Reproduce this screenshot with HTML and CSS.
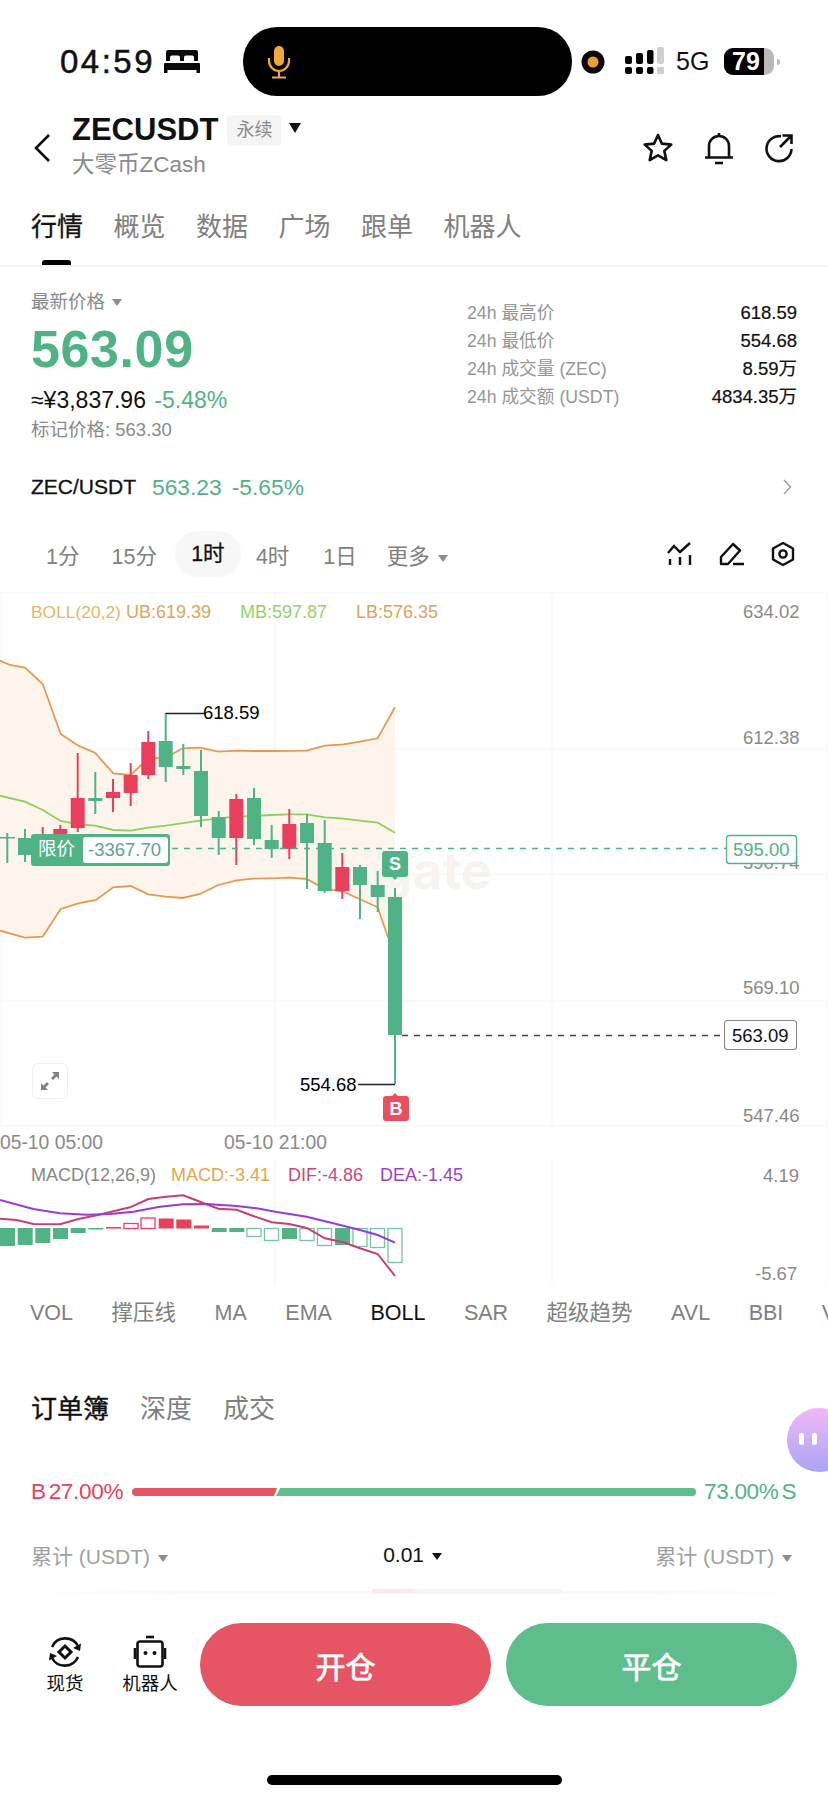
FILE: index.html
```html
<!DOCTYPE html>
<html lang="zh">
<head>
<meta charset="utf-8">
<title>ZECUSDT</title>
<link rel="stylesheet" href="styles.css">
</head>
<body>
<div class="page">

<!-- status bar -->
<div class="status">
  <span class="time">04:59</span>
  <svg class="bed" width="36" height="25" viewBox="0 0 36 25"><path d="M4 1h28a2 2 0 0 1 2 2v9h-4V8.500a2 2 0 0 0-2-2h-6a2 2 0 0 0-2 2V12h-4V8.500a2 2 0 0 0-2-2H8a2 2 0 0 0-2 2V12H2V3a2 2 0 0 1 2-2zM1 14h34a1 1 0 0 1 1 1v9h-3.500v-3h-29v3H0v-9a1 1 0 0 1 1-1z" fill="#0a0a0a"/></svg>
  <div class="island">
    <svg width="24" height="34" viewBox="0 0 24 34"><rect x="7" y="1" width="10" height="20" rx="5" fill="#eea73c"/><path d="M2 13v3a10 10 0 0 0 20 0v-3M12 26v6M5 32.500h14" fill="none" stroke="#eea73c" stroke-width="2.200"/></svg>
  </div>
  <svg class="rec" width="24" height="24" viewBox="0 0 24 24"><circle cx="12" cy="12" r="11.500" fill="#0a0a0a"/><circle cx="12" cy="12" r="5.500" fill="#ee9c38"/></svg>
  <svg class="signal" width="40" height="28" viewBox="0 0 40 28">
    <rect x="0" y="9" width="7" height="8" rx="2"/><rect x="0" y="20" width="7" height="7" rx="2"/>
    <rect x="11" y="6" width="7" height="11" rx="2"/><rect x="11" y="20" width="7" height="7" rx="2"/>
    <rect x="22" y="3" width="6.500" height="14" rx="2"/><rect x="22" y="20" width="6.500" height="7" rx="2"/>
    <rect x="32" y="0" width="7" height="17" rx="2" fill="#cfcfcf"/><rect x="32" y="20" width="7" height="7" rx="1" fill="#cfcfcf"/>
  </svg>
  <span class="net">5G</span>
  <div class="battery"><span class="battery-fill">79</span></div>
  <span class="battery-nub"></span>
</div>

<!-- title -->
<div class="head">
  <svg class="back" width="18" height="30" viewBox="0 0 18 30"><path d="M16 2 3 15l13 13" fill="none" stroke="#111" stroke-width="2.600"/></svg>
  <div class="title-col">
    <div class="title-row">
      <span class="symbol">ZECUSDT</span>
      <span class="badge">永续</span>
      <span class="title-caret"></span>
    </div>
    <div class="subtitle">大零币ZCash</div>
  </div>
  <div class="head-icons">
    <svg width="32" height="32" viewBox="0 0 32 32"><path d="m16 3 3.900 8.600 9.400 1-7 6.300 2 9.200L16 23.400l-8.300 4.700 2-9.200-7-6.300 9.400-1z" fill="none" stroke="#111" stroke-width="2.600" stroke-linejoin="round"/></svg>
    <svg width="30" height="34" viewBox="0 0 30 34"><path d="M1 26.500h28M5 26.500V15a10 10 0 0 1 20 0v11.500M15 2v3M11 32h8" fill="none" stroke="#111" stroke-width="2.600"/></svg>
    <svg width="30" height="30" viewBox="0 0 30 30"><path d="M17 3.300A12.500 12.500 0 1 0 27.500 16M16 14 27 3M18.500 2.500H27.500V11" fill="none" stroke="#111" stroke-width="2.600"/></svg>
  </div>
</div>

<div class="tabs">
  <span class="tab tab-on">行情</span>
  <span class="tab">概览</span>
  <span class="tab">数据</span>
  <span class="tab">广场</span>
  <span class="tab">跟单</span>
  <span class="tab">机器人</span>
</div>

<!-- price block -->
<div class="market">
  <div class="market-left">
    <div class="last-label">最新价格 <i class="caret"></i></div>
    <div class="price">563.09</div>
    <div class="sub-price">≈¥3,837.96 <span class="green">-5.48%</span></div>
    <div class="mark">标记价格: 563.30</div>
  </div>
  <div class="market-right">
    <div class="stat"><span>24h 最高价</span><b>618.59</b></div>
    <div class="stat"><span>24h 最低价</span><b>554.68</b></div>
    <div class="stat"><span>24h 成交量 (ZEC)</span><b>8.59万</b></div>
    <div class="stat"><span>24h 成交额 (USDT)</span><b>4834.35万</b></div>
  </div>
</div>

<div class="spot-row">
  <span class="spot-name">ZEC/USDT</span>
  <span class="green spot-price">563.23</span>
  <span class="green spot-price">-5.65%</span>
  <svg class="spot-arrow" width="9" height="16" viewBox="0 0 9 16"><path d="m1 1 6.500 7L1 15" fill="none" stroke="#999" stroke-width="1.400"/></svg>
</div>

<div class="periods">
  <span class="period p1">1分</span>
  <span class="period p2">15分</span>
  <span class="period period-on">1时</span>
  <span class="period p4">4时</span>
  <span class="period p5">1日</span>
  <span class="period p6">更多 <i class="caret"></i></span>
  <div class="period-icons">
    <svg width="26" height="24" viewBox="0 0 26 24"><path d="M1 11 7 4l6 6 10-9M3 17v6M13 15v8M23 13v10" fill="none" stroke="#111" stroke-width="2.400"/></svg>
    <svg width="26" height="24" viewBox="0 0 26 24"><path d="M2 22v-7L14 2l7 6.500L9 22zM14 22h11" fill="none" stroke="#111" stroke-width="2.400" stroke-linejoin="round"/></svg>
    <svg width="24" height="26" viewBox="0 0 24 26"><path d="m12 2 10 5.500v11L12 24 2 18.500v-11z" fill="none" stroke="#111" stroke-width="2.400" stroke-linejoin="round"/><circle cx="12" cy="13" r="3.600" fill="none" stroke="#111" stroke-width="2.400"/></svg>
  </div>
</div>

<!-- chart, coordinates are page coordinates -->
<div class="chart">
<svg class="chart-svg" width="828" height="693" viewBox="0 592 828 693">
  <g class="grid">
    <path d="M0 592.500H828M0 749H828M0 874H828M0 1001H828M0 1126H828M275 592V1126M552 592V1126M275 1160V1285M552 1160V1285M1 592V1126M827 592V1285"/>
  </g>
  <polygon class="band" points="0,660.700 10,665 25,667.700 42.700,684 60.700,734 78.300,745.700 95,752.700 113.300,773.300 130.700,775 148.300,758.300 165.700,757.700 182.700,748.300 200,747.700 218.300,751.700 236.700,750.700 253.300,751 271.700,751 306.700,750.700 325,745.700 343.300,744.300 360,741.700 377.700,738.300 395,707.300 395,960 388.300,938.300 377.700,907.300 360,899.300 343.300,891.700 325,889 306.700,879 289.300,877.700 271.700,878.300 253.300,878.700 236.700,880.300 218.300,885 200,894 182.700,898 165.700,896.700 148.300,894.300 130.700,886 113.300,887.300 96,900 78.300,903.300 60.700,909 42.700,936.700 25,937.700 0,930.700"/>
  <text class="watermark" x="492" y="889">gate</text>
  <polyline class="line boll-edge" points="0,660.700 10,665 25,667.700 42.700,684 60.700,734 78.300,745.700 95,752.700 113.300,773.300 130.700,775 148.300,758.300 165.700,757.700 182.700,748.300 200,747.700 218.300,751.700 236.700,750.700 253.300,751 271.700,751 306.700,750.700 325,745.700 343.300,744.300 360,741.700 377.700,738.300 395,707.300"/>
  <polyline class="line boll-edge" points="0,930.700 25,937.700 42.700,936.700 60.700,909 78.300,903.300 96,900 113.300,887.300 130.700,886 148.300,894.300 165.700,896.700 182.700,898 200,894 218.300,885 236.700,880.300 253.300,878.700 271.700,878.300 289.300,877.700 306.700,879 325,889 343.300,891.700 360,899.300 377.700,907.300 388.300,938.300"/>
  <polyline class="line boll-mid" points="0,795.700 25,801.700 42.700,810 60.700,821 78.300,824.300 95,825.700 113.300,830 130.700,830.700 148.300,827.700 165.700,825.700 200,820.700 218.300,818.300 236.300,816.700 271.700,815 289.300,814.300 306.700,814.300 325,817.300 343.300,818.700 360,820.700 377.700,822.700 395,832.700"/>

  <!-- candles: wicks -->
  <path class="wick up" d="M7.300 833V863M25 829V862M95.300 772V814M165.700 713V782M183.300 744V775M201 750V827M218.700 811V855M254 788V845M271.700 825V858M307 814V889M324.700 820V893M360 865V919M377.700 871V912M395 888V1084"/>
  <path class="wick down" d="M42.700 827V840M60.300 825V840M77.700 753V832M113 779V812M130.700 763V806M148.300 731V779M236.300 794V865M289.300 809V859M342.300 853V899"/>
  <!-- candles: bodies -->
  <g class="up-fill">
    <rect x="0" y="837" width="15" height="1.500"/>
    <rect x="18" y="838" width="14" height="17"/>
    <rect x="88.300" y="798" width="14" height="3"/>
    <rect x="158.700" y="741" width="14" height="26"/>
    <rect x="176.300" y="766" width="14" height="3"/>
    <rect x="194" y="771" width="14" height="45"/>
    <rect x="211.700" y="817" width="14" height="21"/>
    <rect x="247" y="798" width="14" height="41"/>
    <rect x="264.700" y="840" width="14" height="9"/>
    <rect x="300" y="823" width="14" height="20"/>
    <rect x="317.700" y="843" width="14" height="48"/>
    <rect x="353" y="867" width="14" height="18"/>
    <rect x="370.700" y="885" width="14" height="12"/>
    <rect x="388" y="897" width="14" height="138"/>
  </g>
  <g class="down-fill">
    <rect x="53.300" y="829" width="14" height="10"/>
    <rect x="70.700" y="798" width="14" height="30"/>
    <rect x="106" y="792" width="14" height="6"/>
    <rect x="123.700" y="775" width="14" height="18"/>
    <rect x="141.300" y="742" width="14" height="33"/>
    <rect x="229.300" y="799" width="14" height="39"/>
    <rect x="282.300" y="824" width="14" height="25"/>
    <rect x="335.300" y="867" width="14" height="24"/>
  </g>

  <!-- high and low marks -->
  <path class="mark-line" d="M165.700 713.500H204M358 1084.500H395"/>
  <text class="mark-text" x="203" y="719">618.59</text>
  <text class="mark-text" x="300" y="1091">554.68</text>

  <!-- axis labels -->
  <text class="axis" x="743" y="617.500">634.02</text>
  <text class="axis" x="743" y="743.500">612.38</text>
  <text class="axis" x="743" y="869">590.74</text>
  <text class="axis" x="743" y="994">569.10</text>
  <text class="axis" x="743" y="1121.500">547.46</text>
  <text class="axis axis-time" x="0" y="1148.500">05-10 05:00</text>
  <text class="axis axis-time" x="224" y="1148.500">05-10 21:00</text>
  <text class="axis" x="763" y="1182">4.19</text>
  <text class="axis" x="755" y="1280">-5.67</text>

  <!-- limit order line -->
  <path class="limit-line" d="M172 848.500H726"/>
  <rect class="limit-tag" x="31" y="834" width="139" height="32" rx="3"/>
  <rect class="limit-box" x="83" y="837" width="85" height="26" rx="3"/>
  <text class="limit-name" x="38" y="855">限价</text>
  <text class="limit-val" x="88" y="856">-3367.70</text>
  <rect class="limit-axis" x="726.500" y="835.500" width="70" height="28" rx="3"/>
  <text class="limit-axis-val" x="733" y="855.500">595.00</text>

  <!-- last price line -->
  <path class="last-line" d="M402 1035.500H724"/>
  <rect class="last-axis" x="724.500" y="1020.500" width="72" height="29" rx="3"/>
  <text class="last-axis-val" x="732" y="1041.500">563.09</text>

  <!-- buy and sell marks -->
  <path class="up-fill" d="M385 851h20a3 3 0 0 1 3 3v20a3 3 0 0 1-3 3h-7l-3 3-3-3h-7a3 3 0 0 1-3-3v-20a3 3 0 0 1 3-3z"/>
  <text class="trade-mark" x="395" y="870">S</text>
  <path class="buy-fill" d="M386 1096h6l3-3 3 3h8a3 3 0 0 1 3 3v19a3 3 0 0 1-3 3h-20a3 3 0 0 1-3-3v-19a3 3 0 0 1 3-3z"/>
  <text class="trade-mark" x="396" y="1115">B</text>

  <!-- legends -->
  <text class="legend legend-boll" x="31" y="617.500" fill="#e3b668">BOLL(20,2)</text>
  <text class="legend" x="126" y="617.500" fill="#dba660">UB:619.39</text>
  <text class="legend" x="240" y="617.500" fill="#92d46c">MB:597.87</text>
  <text class="legend" x="356" y="617.500" fill="#dfa25a">LB:576.35</text>
  <text class="legend" x="31" y="1181" fill="#888">MACD(12,26,9)</text>
  <text class="legend" x="171" y="1181" fill="#e5a650">MACD:-3.41</text>
  <text class="legend" x="288" y="1181" fill="#c9497a">DIF:-4.86</text>
  <text class="legend" x="380" y="1181" fill="#9a3fd2">DEA:-1.45</text>

  <!-- macd bars -->
  <g class="up-fill">
    <rect x="0" y="1228" width="15" height="18"/>
    <rect x="17.700" y="1228" width="15" height="17"/>
    <rect x="35.300" y="1228" width="15" height="15"/>
    <rect x="53" y="1228" width="15" height="11"/>
    <rect x="70.700" y="1228" width="15" height="5"/>
    <rect x="88.300" y="1228" width="15" height="1.500"/>
    <rect x="211.700" y="1228" width="15" height="4"/>
    <rect x="229.300" y="1228" width="15" height="4"/>
    <rect x="282" y="1228" width="15" height="11"/>
    <rect x="335" y="1228" width="15" height="17"/>
  </g>
  <g class="down-fill">
    <rect x="106" y="1227" width="15" height="1.500"/>
    <rect x="158.700" y="1218.500" width="15" height="10"/>
    <rect x="176.300" y="1219.500" width="15" height="9"/>
    <rect x="194" y="1225.500" width="15" height="3"/>
  </g>
  <g class="hollow-down">
    <rect x="124" y="1223.500" width="14" height="5"/>
    <rect x="141" y="1218" width="14" height="10.500"/>
  </g>
  <g class="hollow-up">
    <rect x="247" y="1228.500" width="14" height="8"/>
    <rect x="264.500" y="1228.500" width="14" height="12"/>
    <rect x="300" y="1228.500" width="14" height="12"/>
    <rect x="317.500" y="1228.500" width="14" height="17"/>
    <rect x="353" y="1228.500" width="14" height="18"/>
    <rect x="370.500" y="1228.500" width="14" height="19"/>
    <rect x="388" y="1228.500" width="14" height="34"/>
  </g>
  <polyline class="line dif" points="0,1218.700 16.700,1220 33.300,1224 60,1224.300 78.300,1219 96.700,1215.300 130,1207.300 148.300,1199 165.700,1196.700 183.300,1195.300 200,1201.700 218.300,1208.700 236.700,1209.700 253.300,1216 271.700,1222.300 289.300,1224 306.700,1228 325,1238.300 343.300,1242.300 360,1248.300 377.700,1254 395,1276"/>
  <polyline class="line dea" points="0,1200 33.300,1209 60,1213.300 86.700,1214.700 110,1214 133.300,1211.700 160,1206.700 183.300,1204.300 206.700,1204 236.700,1206 256.700,1208.300 276.700,1212 306.700,1216.700 333.300,1223.300 360,1230 377.700,1235 395,1242.700"/>
</svg>
<div class="expand">
  <svg width="20" height="20" viewBox="0 0 20 20"><path d="M12 1h7v7l-2.500-2.500-3.500 3.500-2-2 3.500-3.500zM8 19H1v-7l2.500 2.500L7 11l2 2-3.500 3.500z" fill="#808080"/></svg>
</div>
</div>

<div class="indicators">
  <span>VOL</span><span>撑压线</span><span>MA</span><span>EMA</span><span class="ind-on">BOLL</span><span>SAR</span><span>超级趋势</span><span>AVL</span><span>BBI</span><span>VR</span>
</div>

<div class="book-tabs">
  <span class="book-on">订单簿</span>
  <span>深度</span>
  <span>成交</span>
</div>

<div class="ratio">
  <span class="ratio-buy">B 27.00%</span>
  <div class="ratio-bar">
    <span class="ratio-red"></span>
    <span class="ratio-green"></span>
  </div>
  <span class="ratio-sell">73.00% S</span>
</div>

<div class="depth-head">
  <span>累计 (USDT) <i class="caret"></i></span>
  <span class="tick">0.01 <i class="caret caret-dark"></i></span>
  <span>累计 (USDT) <i class="caret"></i></span>
</div>

<div class="depth-rule"><span class="depth-first"></span></div>

<div class="actions">
  <div class="action">
    <svg width="34" height="34" viewBox="0 0 34 34"><path d="M4 12A14.500 14.500 0 0 1 30 11M30 22A14.500 14.500 0 0 1 4 23" fill="none" stroke="#111" stroke-width="2.600"/><path d="m33 8.500-1 7.500-7-3zM1 25.500l1-7.500 7 3z" fill="#111"/><path d="m17 11 6 6-6 6-6-6z" fill="none" stroke="#111" stroke-width="3"/></svg>
    <span>现货</span>
  </div>
  <div class="action action-bot">
    <svg width="34" height="34" viewBox="0 0 34 34"><path d="M13 2h8" stroke="#111" stroke-width="2.600"/><rect x="4.500" y="6.500" width="25" height="25" rx="2.500" fill="none" stroke="#111" stroke-width="2.600"/><path d="M2 13v11M32 13v11" stroke="#111" stroke-width="2.600"/><circle cx="12.500" cy="18" r="2" fill="#111"/><circle cx="21.500" cy="18" r="2" fill="#111"/></svg>
    <span>机器人</span>
  </div>
  <button class="trade-btn btn-open">开仓</button>
  <button class="trade-btn btn-close">平仓</button>
</div>

<div class="home-bar"></div>

<div class="assistant"><i></i><i></i></div>

</div>
</body>
</html>
```

FILE: styles.css
```css
* {
  box-sizing: border-box;
}
body {
  margin: 0;
  background: #fff;
  font-family: "Liberation Sans", "Noto Sans CJK SC", sans-serif;
  color: #111;
}
i {
  font-style: normal;
}
.page {
  position: relative;
  width: 828px;
  height: 1800px;
  overflow: hidden;
}
.green {
  color: #4fb386;
}

/* status bar */
.status {
  display: flex;
  align-items: center;
  height: 69px;
  margin-top: 27px;
  padding-left: 60px;
}
.time {
  width: 96px;
  font-size: 33px;
  font-weight: 500;
  letter-spacing: 2.500px;
  white-space: nowrap;
  -webkit-text-stroke: .5px #111;
}
.bed {
  margin-left: 8px;
}
.island {
  display: flex;
  align-items: center;
  width: 329px;
  height: 69px;
  margin-left: 43px;
  padding-left: 24px;
  background: #000;
  border-radius: 34px;
}
.rec {
  margin-left: 9px;
}
.signal {
  margin-left: 20px;
  margin-top: -1px;
}
.net {
  margin-left: 11px;
  width: 36px;
  font-size: 25px;
}
.battery {
  width: 50px;
  height: 27px;
  margin-left: 12px;
  background: #b9b9b9;
  border-radius: 9px;
  overflow: hidden;
}
.battery-fill {
  display: block;
  width: 40px;
  height: 27px;
  padding-left: 8px;
  background: #000;
  color: #fff;
  font-size: 25px;
  font-weight: 700;
  line-height: 27px;
}
.battery-nub {
  width: 3px;
  height: 6px;
  margin-left: 3px;
  background: #b9b9b9;
  border-radius: 0 3px 3px 0;
}

/* title */
.head {
  display: flex;
  align-items: center;
  height: 72px;
  margin-top: 16px;
  padding-left: 33px;
}
.title-col {
  margin-left: 21px;
}
.title-row {
  display: flex;
  align-items: center;
  height: 36px;
}
.symbol {
  font-size: 31px;
  font-weight: 700;
}
.badge {
  width: 54px;
  height: 30px;
  margin-left: 9px;
  margin-top: -1px;
  background: #f5f5f5;
  border-radius: 4px;
  color: #8a8a8a;
  font-size: 18px;
  line-height: 30px;
  text-align: center;
}
.title-caret {
  width: 0;
  height: 0;
  margin-left: 8px;
  margin-bottom: 4px;
  border-left: 6.500px solid transparent;
  border-right: 6.500px solid transparent;
  border-top: 10px solid #111;
}
.subtitle {
  height: 36px;
  color: #8a8a8a;
  font-size: 22.500px;
  line-height: 34px;
}
.head-icons {
  display: flex;
  align-items: center;
  gap: 30px;
  margin-left: auto;
  margin-right: 34px;
  margin-top: 0;
}
.tabs {
  display: flex;
  gap: 30.500px;
  height: 83px;
  padding: 25px 0 0 31px;
  border-bottom: 2px solid #f6f6f6;
}
.tab {
  position: relative;
  height: 36px;
  color: #808080;
  font-size: 26px;
  line-height: 36px;
}
.tab-on {
  color: #111;
  -webkit-text-stroke: .3px #111;
}
.tab-on::after {
  content: "";
  position: absolute;
  left: 11px;
  top: 51px;
  width: 29px;
  height: 5px;
  background: #000;
  border-radius: 3px 3px 0 0;
}

/* price block */
.market {
  display: flex;
  height: 200px;
  padding: 23px 31px 0 31px;
}
.market-left {
  width: 436px;
}
.last-label {
  height: 24px;
  color: #8a8a8a;
  font-size: 18.500px;
  line-height: 24px;
}
.caret {
  display: inline-block;
  width: 0;
  height: 0;
  margin-left: 2px;
  vertical-align: 2px;
  border-left: 5px solid transparent;
  border-right: 5px solid transparent;
  border-top: 7px solid #8a8a8a;
}
.caret-dark {
  border-top-color: #111;
}
.price {
  height: 60px;
  margin-top: 5px;
  color: #4fb386;
  font-size: 52px;
  font-weight: 700;
  line-height: 60px;
  letter-spacing: .6px;
}
.sub-price {
  height: 28px;
  margin-top: 7px;
  font-size: 23px;
  line-height: 28px;
}
.sub-price .green {
  margin-left: 2px;
}
.mark {
  height: 24px;
  margin-top: 4px;
  color: #8a8a8a;
  font-size: 18.500px;
  line-height: 24px;
}
.market-right {
  flex: 1;
  padding-top: 9px;
}
.stat {
  display: flex;
  justify-content: space-between;
  height: 28px;
  color: #969696;
  font-size: 17.700px;
  line-height: 28px;
}
.stat b {
  color: #111;
  font-size: 18.500px;
  font-weight: 400;
  -webkit-text-stroke: .2px #111;
}
.spot-row {
  display: flex;
  align-items: center;
  gap: 10px;
  height: 40px;
  padding: 0 36px 0 31px;
  font-size: 21px;
}
.spot-name {
  margin-right: 6px;
  font-weight: 400;
  -webkit-text-stroke: .3px #111;
}
.spot-price {
  font-size: 22.800px;
}
.spot-arrow {
  margin-left: auto;
}

/* period row */
.periods {
  display: flex;
  align-items: center;
  height: 46px;
  margin-top: 24px;
  padding-right: 33px;
  color: #808080;
  font-size: 21.500px;
}
.period {
  white-space: nowrap;
}
.p1 {
  margin-left: 46px;
}
.p2 {
  margin-left: 32px;
}
.period-on {
  width: 66px;
  height: 46px;
  margin-left: 18px;
  background: #f7f7f7;
  border-radius: 23px;
  color: #111;
  line-height: 46px;
  text-align: center;
  -webkit-text-stroke: .3px #111;
}
.p4 {
  margin-left: 15px;
}
.p5 {
  margin-left: 34px;
}
.p6 {
  margin-left: 30px;
}
.period-icons {
  display: flex;
  align-items: center;
  gap: 26px;
  margin-left: auto;
}

/* chart */
.chart {
  position: relative;
  height: 693px;
  margin-top: 15px;
}
.chart-svg {
  display: block;
  font-family: "Liberation Sans", "Noto Sans CJK SC", sans-serif;
}
.grid path {
  fill: none;
  stroke: #f9f9f9;
  stroke-width: 1.500;
}
.watermark {
  fill: #f6f3f0;
  font-family: Inter, "Liberation Sans", sans-serif;
  font-size: 52px;
  font-weight: 700;
  text-anchor: end;
}
.band {
  fill: #fdf5ec;
}
.line {
  fill: none;
  stroke-width: 1.800;
}
.boll-edge {
  stroke: #e59a50;
}
.boll-mid {
  stroke: #8fd05c;
}
.dif {
  stroke: #c8416e;
  stroke-width: 2;
}
.dea {
  stroke: #9b3bd6;
  stroke-width: 2;
}
.wick {
  fill: none;
  stroke-width: 2;
}
.wick.up {
  stroke: #4fb386;
}
.wick.down {
  stroke: #e8405c;
}
.up-fill {
  fill: #4fb386;
}
.down-fill {
  fill: #e8405c;
}
.buy-fill {
  fill: #e8505f;
}
.hollow-up rect {
  fill: none;
  stroke: #79c4a2;
  stroke-width: 1.300;
}
.hollow-down rect {
  fill: none;
  stroke: #e8405c;
  stroke-width: 1.300;
}
.mark-line {
  fill: none;
  stroke: #222;
  stroke-width: 1.400;
}
.mark-text {
  fill: #000;
  font-size: 18.500px;
}
.limit-line {
  fill: none;
  stroke: #4fb386;
  stroke-width: 1.400;
  stroke-dasharray: 6 6;
}
.limit-tag {
  fill: #4fb386;
}
.limit-box {
  fill: #fff;
}
.limit-name {
  fill: #fff;
  font-size: 18.500px;
}
.limit-val {
  fill: #5aa592;
  font-size: 18.500px;
}
.limit-axis {
  fill: #fff;
  stroke: #4fb386;
  stroke-width: 1.300;
}
.limit-axis-val {
  fill: #4fb386;
  font-size: 18.500px;
}
.last-line {
  fill: none;
  stroke: #444;
  stroke-width: 1.300;
  stroke-dasharray: 6 6;
}
.last-axis {
  fill: #fff;
  stroke: #888;
  stroke-width: 1.100;
}
.last-axis-val {
  fill: #111;
  font-size: 18.500px;
}
.trade-mark {
  fill: #fff;
  font-size: 18px;
  font-weight: 700;
  text-anchor: middle;
}
.axis {
  fill: #8a8a8a;
  font-size: 18.500px;
}
.axis-time {
  font-size: 19.300px;
}
.legend {
  font-size: 18px;
}
.legend-boll {
  font-size: 17.400px;
}
.expand {
  position: absolute;
  left: 32px;
  top: 471px;
  display: flex;
  align-items: center;
  justify-content: center;
  width: 36px;
  height: 36px;
  background: #fff;
  border: 1.500px solid #f0f0f0;
  border-radius: 6px;
}

/* below the chart */
.indicators {
  display: flex;
  gap: 38.500px;
  height: 36px;
  margin-top: 10px;
  padding-left: 30px;
  color: #808080;
  font-size: 21.500px;
  line-height: 36px;
  white-space: nowrap;
}
.ind-on {
  color: #111;
}
.book-tabs {
  display: flex;
  gap: 31px;
  height: 36px;
  margin-top: 60px;
  padding-left: 31px;
  color: #808080;
  font-size: 26px;
  line-height: 36px;
}
.book-on {
  color: #111;
  -webkit-text-stroke: .4px #111;
}
.ratio {
  display: flex;
  align-items: center;
  height: 32px;
  margin-top: 49px;
  padding: 0 31px;
  font-size: 22.500px;
}
.ratio-buy {
  width: 101px;
  color: #e8405c;
  letter-spacing: -.3px;
  word-spacing: -3px;
  white-space: nowrap;
}
.ratio-bar {
  display: flex;
  gap: 1px;
  width: 564px;
  height: 8px;
}
.ratio-red {
  width: 145px;
  background: #e55564;
  border-radius: 4px 0 0 4px;
  clip-path: polygon(0 0, 100% 0, 98% 100%, 0 100%);
}
.ratio-green {
  flex: 1;
  margin-left: -2px;
  background: #5dbd8b;
  border-radius: 0 4px 4px 0;
  clip-path: polygon(1% 0, 100% 0, 100% 100%, 0 100%);
}
.ratio-sell {
  margin-left: 8px;
  color: #4fb386;
  letter-spacing: -.3px;
  word-spacing: -3px;
  white-space: nowrap;
}
.depth-head {
  display: flex;
  justify-content: space-between;
  align-items: center;
  height: 32px;
  margin-top: 31px;
  padding: 0 36px 0 31px;
  color: #a0a0a0;
  font-size: 21px;
}
.tick {
  margin-left: 2px;
  color: #111;
}
.depth-rule {
  position: relative;
  height: 3px;
  margin-top: 20px;
  background: linear-gradient(90deg, #fff, #f8f8f8 30%, #f8f8f8 70%, #fff);
}
.depth-first {
  position: absolute;
  left: 372px;
  top: -2px;
  width: 190px;
  height: 4px;
  background: linear-gradient(90deg, #fde9ec 20%, #f5f5f5 25%);
}
.actions {
  display: flex;
  align-items: center;
  height: 83px;
  margin-top: 29px;
  padding-right: 31px;
}
.action {
  display: flex;
  flex-direction: column;
  align-items: center;
  width: 76px;
  margin-left: 27px;
  margin-top: 2px;
  font-size: 18.500px;
}
.action span {
  margin-top: 2px;
  line-height: 26px;
}
.action-bot {
  margin-left: 9px;
  width: 76px;
}
.trade-btn {
  width: 291px;
  height: 83px;
  border: none;
  border-radius: 42px;
  color: #fff;
  font-family: inherit;
  font-size: 30px;
  font-weight: 400;
  -webkit-text-stroke: .7px #fff;
}
.btn-open {
  margin-left: 12px;
  background: #e55564;
}
.btn-close {
  margin-left: 15px;
  background: #5dbd8b;
}
.home-bar {
  width: 295px;
  height: 10px;
  margin: 69px 0 0 267px;
  background: #000;
  border-radius: 5px;
}
.assistant {
  position: absolute;
  left: 787px;
  top: 1408px;
  display: flex;
  justify-content: center;
  gap: 8px;
  width: 64px;
  height: 64px;
  padding: 25px 23px 0 0;
  background: linear-gradient(180deg, #f0b8f5, #a9a6f5);
  border-radius: 32px;
}
.assistant i {
  width: 5px;
  height: 12px;
  background: #fff;
  border-radius: 3px;
}
```
